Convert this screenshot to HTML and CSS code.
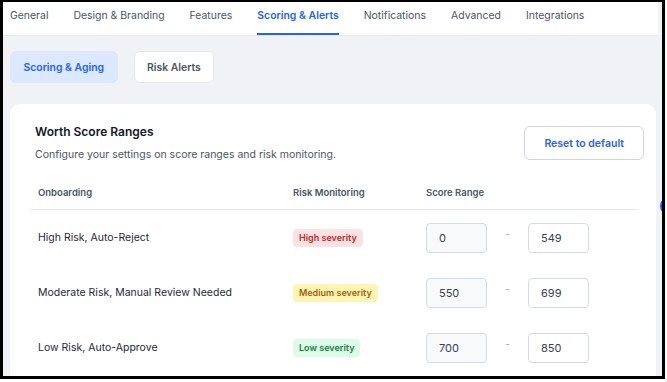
FILE: index.html
```html
<!DOCTYPE html>
<html lang="en">

<head>
    <meta charset="UTF-8">
    <meta name="viewport" content="width=device-width, initial-scale=1.0">
    <title>Settings - Scoring &amp; Alerts</title>
    <link rel="stylesheet" href="styles.css">
</head>

<body>

<div class="frame">
    <nav class="tabs">
        <a class="tab">General</a>
        <a class="tab">Design &amp; Branding</a>
        <a class="tab">Features</a>
        <a class="tab active">Scoring &amp; Alerts</a>
        <a class="tab">Notifications</a>
        <a class="tab">Advanced</a>
        <a class="tab">Integrations</a>
    </nav>

    <main class="page">
        <div class="subtabs">
            <button type="button" class="subtab selected">Scoring &amp; Aging</button>
            <button type="button" class="subtab">Risk Alerts</button>
        </div>

        <section class="card">
            <div class="cardHeader">
                <div>
                    <h2>Worth Score Ranges</h2>
                    <p>Configure your settings on score ranges and risk monitoring.</p>
                </div>
                <button type="button" class="resetBtn">Reset to default</button>
            </div>

            <table class="ranges">
                <thead>
                <tr>
                    <th class="colName">Onboarding</th>
                    <th class="colRisk">Risk Monitoring</th>
                    <th>Score Range</th>
                </tr>
                </thead>
                <tbody>
                <tr>
                    <td>High Risk, Auto-Reject</td>
                    <td><span class="badge high">High severity</span></td>
                    <td>
                        <div class="range">
                            <input type="text" class="locked" value="0" readonly/>
                            <span class="dash">-</span>
                            <input type="text" value="549"/>
                        </div>
                    </td>
                </tr>
                <tr>
                    <td>Moderate Risk, Manual Review Needed</td>
                    <td><span class="badge medium">Medium severity</span></td>
                    <td>
                        <div class="range">
                            <input type="text" class="locked" value="550" readonly/>
                            <span class="dash">-</span>
                            <input type="text" value="699"/>
                        </div>
                    </td>
                </tr>
                <tr>
                    <td>Low Risk, Auto-Approve</td>
                    <td><span class="badge low">Low severity</span></td>
                    <td>
                        <div class="range">
                            <input type="text" class="locked" value="700" readonly/>
                            <span class="dash">-</span>
                            <input type="text" value="850"/>
                        </div>
                    </td>
                </tr>
                </tbody>
            </table>
        </section>
    </main>

    <span class="helpBubble"></span>
</div>

</body>

</html>
```

FILE: styles.css
```css
html, body {
    margin: 0;
    background: #fff;
}

body {
    font-family: Inter, "Noto Sans", sans-serif;
    color: #1f2937;
}

.frame {
    position: relative;
    width: 665px;
    height: 379px;
    box-sizing: border-box;
    border: 3px solid #000;
    border-top-width: 2px;
    overflow: hidden;
    background: #f1f2f6;
    display: flex;
    flex-direction: column;
}

.tabs {
    display: flex;
    gap: 25px;
    height: 33px;
    padding: 0 7px;
    margin-right: 4px;
    background: #fff;
    border-bottom: 1px solid #e5e7eb;
    flex-shrink: 0;
}

.tab {
    display: flex;
    align-items: center;
    height: 100%;
    box-sizing: border-box;
    padding-bottom: 5px;
    font-size: 10.45px;
    color: #4b5563;
    border-bottom: 2px solid transparent;
}

.tab.active {
    color: #2563eb;
    font-weight: 600;
    border-bottom-color: #2563eb;
}

.page {
    flex: 1;
    padding: 15px 6px 0 7px;
}

.subtabs {
    display: flex;
    gap: 16px;
}

.subtab {
    height: 32px;
    padding: 0 12.5px;
    font-family: inherit;
    font-size: 10.4px;
    font-weight: 600;
    color: #4b5563;
    background: #fff;
    border: 1px solid #e5e7eb;
    border-radius: 6px;
}

.subtab.selected {
    color: #2563eb;
    background: #dbe8fd;
    border-color: #dbe8fd;
}

.card {
    margin-top: 21px;
    padding: 19px 12px 20px 20px;
    background: #fff;
    border-radius: 11px;
}

.cardHeader {
    display: flex;
    justify-content: space-between;
    align-items: center;
    padding-left: 5px;
}

.cardHeader h2 {
    margin: 0;
    font-size: 12px;
    font-weight: 600;
    color: #111827;
    line-height: 18px;
}

.cardHeader p {
    margin: 6px 0 0;
    font-size: 10.5px;
    color: #4b5563;
    line-height: 16px;
}

.resetBtn {
    height: 34px;
    padding: 0 19px;
    font-family: inherit;
    font-size: 10.5px;
    font-weight: 600;
    color: #2563eb;
    background: #fff;
    border: 1px solid #d1d5db;
    border-radius: 6px;
}

.ranges {
    width: calc(100% - 6px);
    margin-top: 12px;
    border-collapse: collapse;
}

.ranges th {
    height: 34px;
    padding: 0 8px;
    text-align: left;
    font-size: 9.5px;
    font-weight: 600;
    color: #4b5563;
    border-bottom: 1px solid #e5e7eb;
}

.colName {
    width: 239px;
}

.colRisk {
    width: 117px;
}

.ranges td {
    height: 55px;
    padding: 0 8px;
    font-size: 10.5px;
    color: #1f2937;
}

.badge {
    display: inline-block;
    padding: 0 6px;
    line-height: 18px;
    font-size: 9px;
    font-weight: 600;
    border-radius: 4px;
}

.badge.high {
    color: #c0262d;
    background: #fee2e2;
}

.badge.medium {
    color: #a16207;
    background: #fef5b4;
}

.badge.low {
    color: #15803d;
    background: #dcfce7;
}

.range {
    display: flex;
    align-items: center;
}

.range input {
    width: 61px;
    height: 30px;
    box-sizing: border-box;
    padding: 0 12px;
    font-family: inherit;
    font-size: 11px;
    color: #374151;
    background: #fff;
    border: 1px solid #d5dbe5;
    border-radius: 4px;
}

.range input.locked {
    background: #f8f9fa;
}

.dash {
    width: 41px;
    padding-bottom: 8px;
    text-align: center;
    font-size: 10px;
    color: #9ca3af;
}

.helpBubble {
    position: absolute;
    top: 195px;
    right: -16px;
    width: 18px;
    height: 18px;
    border-radius: 50%;
    background: #3b4fe0;
}
```
